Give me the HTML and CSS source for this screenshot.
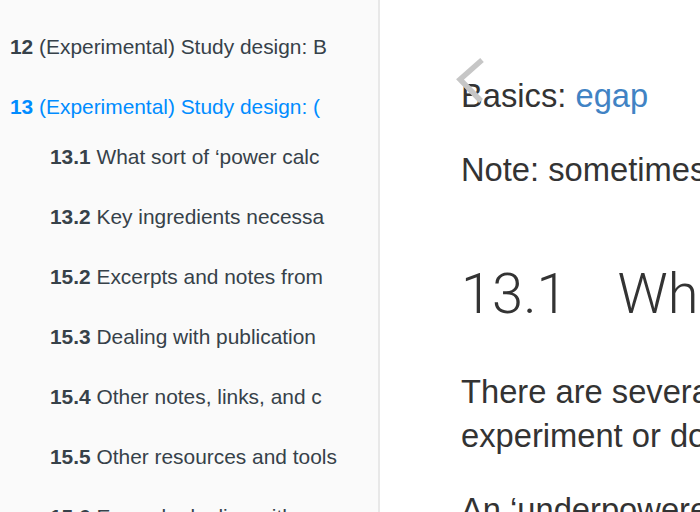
FILE: index.html
```html
<!DOCTYPE html>
<html>
<head>
<meta charset="utf-8">
<link rel="stylesheet" href="styles.css">
</head>
<body>
<div class="book">
  <nav class="summary">
    <ul class="toc">
      <li><a class="link"><b>12</b> (Experimental) Study design: B</a></li>
      <li class="active">
        <a class="link current"><b>13</b> (Experimental) Study design: (</a>
        <ul class="sub">
          <li><a class="link"><b>13.1</b> What sort of ‘power calc</a></li>
          <li><a class="link"><b>13.2</b> Key ingredients necessa</a></li>
          <li><a class="link"><b>15.2</b> Excerpts and notes from</a></li>
          <li><a class="link"><b>15.3</b> Dealing with publication</a></li>
          <li><a class="link"><b>15.4</b> Other notes, links, and c</a></li>
          <li><a class="link"><b>15.5</b> Other resources and tools</a></li>
          <li><a class="link"><b>15.6</b> Example dealing with powe</a></li>
        </ul>
      </li>
    </ul>
  </nav>
  <main class="body">
    <svg class="prev" width="32" height="50" viewBox="0 0 32 50">
      <polyline points="27,5 5,24.5 26,46" fill="none" stroke="#c6c6c6" stroke-width="5.4"/>
    </svg>
    <section class="page">
      <p>Basics: <a class="ext">egap</a></p>
      <p>Note: sometimes this is called ‘power analysis’ or ‘sample size calculation’</p>
      <h2><span class="num">13.1</span>What sort of ‘power calculations’ make sense</h2>
      <p>There are several reasons to do a power analysis before running an<br>experiment or doing a survey, and several ways to do this.</p>
      <p>An ‘underpowered’ study is one that is unlikely to detect an effect</p>
    </section>
  </main>
</div>
</body>
</html>
```
FILE: styles.css
```css
html, body {
  margin: 0;
  padding: 0;
  width: 700px;
  height: 512px;
  overflow: hidden;
  background: #fff;
}

.book {
  display: flex;
  height: 512px;
}

.summary {
  flex: 0 0 378px;
  background: #fafafa;
  border-right: 2px solid #e8e8e8;
  padding-top: 17px;
  overflow: hidden;
  font-family: "Liberation Sans", Arial, sans-serif;
  font-size: 20.9px;
  color: #364149;
}

.toc, .sub {
  list-style: none;
  margin: 0;
  padding: 0;
}

.link {
  display: block;
  line-height: 28px;
  padding: 16px 0 16px 10px;
  white-space: nowrap;
}

.link b {
  font-weight: bold;
}

.current {
  color: #008cff;
  padding-bottom: 6px;
}

.sub .link {
  padding-left: 50px;
}

.body {
  position: relative;
  flex: 1;
  overflow: hidden;
  font-family: "Liberation Sans", Arial, sans-serif;
  color: #333;
}

.prev {
  position: absolute;
  left: 75px;
  top: 55px;
}

.page {
  padding: 74px 0 0 81px;
  white-space: nowrap;
}

.page p {
  margin: 0 0 30px;
  font-size: 32.7px;
  line-height: 44px;
}

.ext {
  color: #4183c4;
}

.page h2 {
  margin: 70px 0 44px;
  font-family: Roboto, "Liberation Sans", sans-serif;
  font-weight: 300;
  font-size: 56px;
  line-height: 64px;
  color: #333;
}

.num {
  margin-right: 50px;
}
```
